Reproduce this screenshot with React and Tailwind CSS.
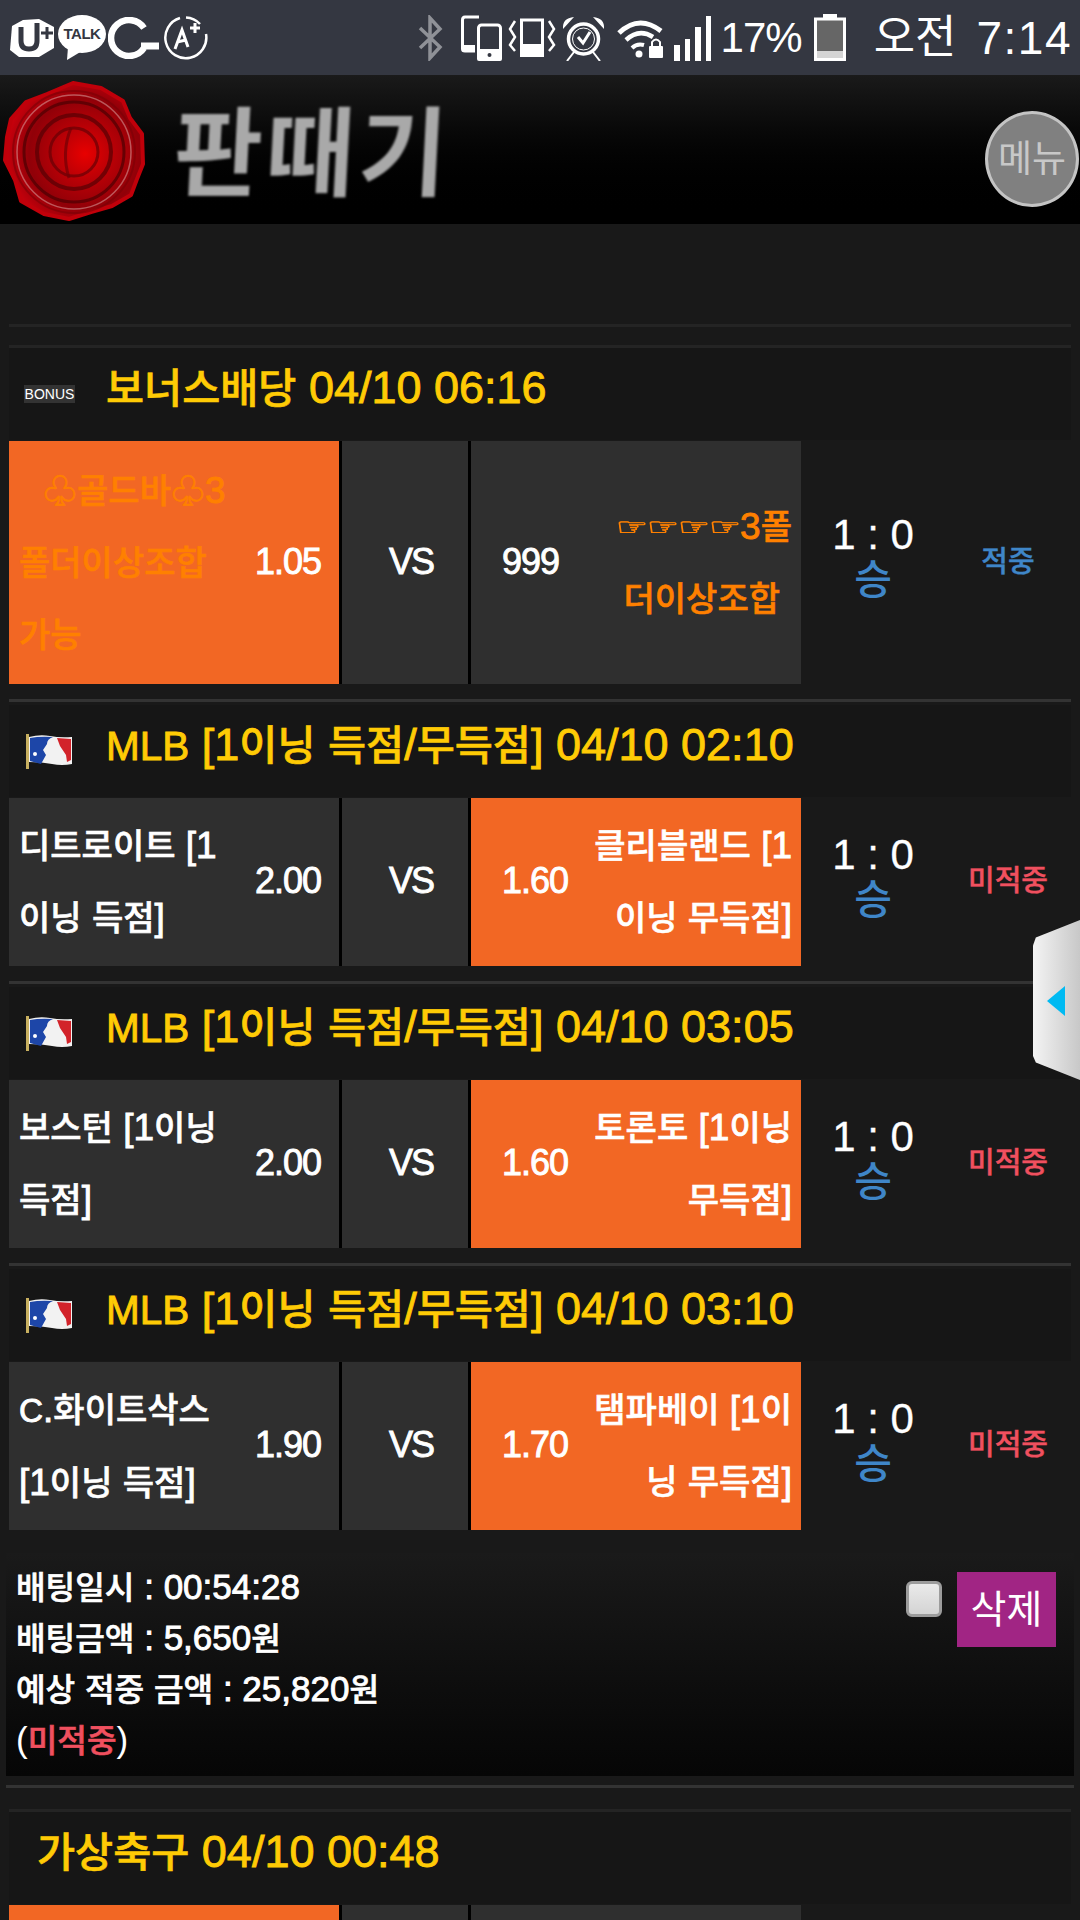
const FONT = "font-['Liberation_Sans','Noto_Sans_CJK_KR',sans-serif]";

const rows = [
  {
    title: 'MLB [1이닝 득점/무득점] 04/10 02:10',
    home: '디트로이트 [1이닝 득점]',
    homeOdds: '2.00',
    away: '클리블랜드 [1이닝 무득점]',
    awayOdds: '1.60',
  },
  {
    title: 'MLB [1이닝 득점/무득점] 04/10 03:05',
    home: '보스턴 [1이닝 득점]',
    homeOdds: '2.00',
    away: '토론토 [1이닝 무득점]',
    awayOdds: '1.60',
  },
  {
    title: 'MLB [1이닝 득점/무득점] 04/10 03:10',
    home: 'C.화이트삭스 [1이닝 득점]',
    homeOdds: '1.90',
    away: '탬파베이 [1이닝 무득점]',
    awayOdds: '1.70',
  },
];

// Digits are wider in the reference than hangul and capitals, so those runs get a smaller size
function Mixed({ text }) {
  return text.split(/([가-힣♧]+|[A-Z]+)/).map((part, i) => {
    if (/[가-힣♧]/.test(part)) {
      return <span key={i} className="text-[0.92em] font-medium [-webkit-text-stroke:0.6px]">{part}</span>;
    }
    if (/[A-Z]/.test(part)) {
      return <span key={i} className="text-[0.9em] [-webkit-text-stroke:0.9px]">{part}</span>;
    }
    return <span key={i} className="[-webkit-text-stroke:0.9px]">{part}</span>;
  });
}

function StatusIcons() {
  return (
    <div className="flex items-center">
      <svg width="25" height="46" viewBox="0 0 25 46" fill="none" stroke="#8f9197" strokeWidth="3.5" className="mr-[18px]">
        <path d="M2 13 L22 32 L12 43 V3 L22 14 L2 33" />
      </svg>
      <svg width="41" height="46" viewBox="0 0 41 46" fill="none" className="mr-[6px]">
        <path d="M18 2 H4 Q1.500 2 1.500 5 V34 Q1.500 36 4 36 H14" stroke="#fff" strokeWidth="3" />
        <rect x="17.500" y="10" width="22" height="34" rx="3" stroke="#fff" strokeWidth="3" />
        <rect x="16" y="34" width="25" height="12" rx="2" fill="#fff" />
        <circle cx="28.500" cy="40" r="2" fill="#343741" />
        <path d="M3 30 H14 V36 H3 Z" fill="#fff" />
      </svg>
      <svg width="48" height="40" viewBox="0 0 48 40" fill="none" className="mr-[5px]">
        <path d="M7 3 L2 11 L7 19 L2 27 L7 33 M41 3 L46 11 L41 19 L46 27 L41 33" stroke="#fff" strokeWidth="2.500" />
        <rect x="13.500" y="2" width="21" height="35" stroke="#fff" strokeWidth="3" />
        <rect x="12" y="26" width="24" height="13" fill="#fff" />
      </svg>
      <svg width="45" height="46" viewBox="0 0 45 46" fill="none" className="mr-[11px]">
        <circle cx="22.500" cy="24" r="15" stroke="#fff" strokeWidth="3.500" />
        <circle cx="22.500" cy="24" r="11" stroke="#fff" strokeWidth="1" />
        <path d="M17 22 L22 28 L29 17" stroke="#fff" strokeWidth="3" />
        <path d="M2 14 Q1 3 13 2 Z M43 14 Q44 3 32 2 Z" fill="#fff" />
        <path d="M13 37 L6 46 M32 37 L39 46" stroke="#fff" strokeWidth="2" />
      </svg>
      <svg width="46" height="40" viewBox="0 0 46 40" fill="none" className="mr-[11px]">
        <path d="M2 15 Q22 -4 44 13" stroke="#fff" strokeWidth="5" />
        <path d="M9 22 Q22 10 36 19" stroke="#fff" strokeWidth="4.500" />
        <path d="M15 30 Q20 25 27 27" stroke="#fff" strokeWidth="4" />
        <circle cx="22" cy="36" r="3.500" fill="#fff" />
        <rect x="32" y="28" width="14" height="12" rx="1" fill="#fff" />
        <path d="M35 28 V24 Q39 19 43 24 V28" stroke="#fff" strokeWidth="2" />
      </svg>
      <div className="flex items-end gap-[5px] h-[45px] mt-[2px] mr-[10px]">
        <div className="w-[6px] h-[16px] bg-white" />
        <div className="w-[5px] h-[22px] bg-white" />
        <div className="w-[6px] h-[34px] bg-white" />
        <div className="w-[5px] h-[45px] bg-white" />
      </div>
    </div>
  );
}

function StatusBar() {
  return (
    <div className={`h-[75px] bg-[#343741] flex items-center pl-[9px] pr-[8px] text-white ${FONT}`}>
      <svg width="45" height="40" viewBox="0 0 45 40" className="mr-[4px]" fill="#fff">
        <path d="M3 8 L14 2 L30 1 L45 9 V30 L30 39 H10 L1 32 Z" />
        <path d="M12 9 V23 Q12 31 20 31 Q28 31 28 23 V5" fill="none" stroke="#343741" strokeWidth="5" />
        <path d="M32 15 H44 M38 9 V21" stroke="#343741" strokeWidth="3" />
      </svg>
      <div className="relative w-[48px] h-[45px] mr-[2px]">
        <svg width="48" height="45" viewBox="0 0 48 45" fill="#fff" className="absolute inset-0">
          <ellipse cx="24" cy="19" rx="24" ry="19" />
          <path d="M10 32 L9 45 L24 36 Z" />
        </svg>
        <span className="absolute left-0 right-0 top-[10px] text-center text-[15px] leading-[18px] font-bold tracking-[-0.5px] text-[#343741]">TALK</span>
      </div>
      <svg width="51" height="42" viewBox="0 0 51 42" fill="none" stroke="#fff" strokeWidth="6.500" className="mr-[3px]">
        <path d="M36 11 A18 18 0 1 0 36 31" />
        <path d="M33 29 H51" strokeWidth="7" />
      </svg>
      <svg width="46" height="44" viewBox="0 0 46 44" fill="none" stroke="#fff" strokeWidth="2.500">
        <path d="M18 2 A20.500 20.500 0 1 0 44 18" />
        <path d="M24 1.500 A21 21 0 0 1 38 8" />
        <path d="M13 33 L20 14 L26 31 M15 26 L24 24" strokeWidth="3" />
        <path d="M28 12 H38 M33 7 V17" strokeWidth="3" />
      </svg>
      <div className="flex-1" />
      <StatusIcons />
      <span className="text-[42px] leading-none tracking-[-1px] mr-[12px]">17%</span>
      <svg width="32" height="47" viewBox="0 0 32 47" className="mr-[28px]" fill="none">
        <rect x="1.500" y="5" width="29" height="40.500" stroke="#fff" strokeWidth="3" fill="#666" />
        <rect x="9" y="0" width="14" height="5" fill="#fff" />
        <rect x="3" y="37" width="26" height="7" fill="#d5d5d5" />
      </svg>
      <span className="text-[45px] leading-none mr-[20px]">오전</span>
      <span className="text-[46px] leading-none tracking-[1.500px]">7:14</span>
    </div>
  );
}

function Seal() {
  return (
    <svg width="146" height="142" viewBox="0 0 146 142" className="shrink-0 ml-[1px]">
      <defs>
        <radialGradient id="wax" cx="58%" cy="52%" r="58%">
          <stop offset="0%" stopColor="#e80000" />
          <stop offset="35%" stopColor="#b80006" />
          <stop offset="70%" stopColor="#900008" />
          <stop offset="100%" stopColor="#c8000c" />
        </radialGradient>
      </defs>
      <path
        d="M72 3 L100 8 L122 21 L129 38 L141 54 L142 84 L136 99 L130 115 L111 126 L90 132 L68 139 L43 134 L20 121 L14 100 L4 80 L6 57 L10 39 L25 22 L46 14 Z"
        fill="url(#wax)"
        stroke="#c0000a"
        strokeWidth="4"
        strokeLinejoin="round"
      />
      <g fill="none">
        <circle cx="73" cy="72" r="61" stroke="#7a0006" strokeWidth="2" opacity="0.6" />
        <circle cx="73" cy="72" r="57" stroke="#d9a0a0" strokeWidth="1.500" opacity="0.55" />
        <circle cx="73" cy="72" r="50" stroke="#4c0003" strokeWidth="3" opacity="0.7" />
        <circle cx="73" cy="72" r="37" stroke="#560004" strokeWidth="4" opacity="0.7" />
        <circle cx="73" cy="72" r="24" stroke="#660005" strokeWidth="3" opacity="0.7" />
        <path d="M70 48 Q60 72 68 98" stroke="#700005" strokeWidth="3" opacity="0.7" />
      </g>
    </svg>
  );
}

function Header() {
  return (
    <div className={`h-[149px] bg-gradient-to-b from-[#1a1a1a] to-black flex items-center relative pt-[2px] ${FONT}`}>
      <Seal />
      <span className="ml-[27px] mt-[8px] text-[96px] leading-none font-bold text-[#a9a9a9] tracking-[4px] -skew-x-3 blur-[0.8px]">
        판때기
      </span>
      <button className="absolute right-[1px] top-[36px] w-[94px] h-[96px] rounded-[50%] bg-[#808080] border-[3px] border-[#c4c4c4] text-[#c8c8c8] text-[37px] leading-none flex items-center justify-center">
        메뉴
      </button>
    </div>
  );
}

function MlbFlag() {
  return (
    <svg width="46" height="35" viewBox="0 0 46 35" className="shrink-0">
      <rect x="0" y="0" width="3" height="35" fill="#c8b060" />
      <path d="M3 3 Q14 0 24 2 T46 3 V30 Q36 32 26 30 T3 28 Z" fill="#f2f2f2" />
      <path d="M4 4 Q14 2 27 3 Q21 5 21 10 L17 16 L20 21 L15 30 L4 27 Z" fill="#1d46a8" />
      <path d="M31 4 L45 5 V26 L41 28 L40 21 L34 12 Z" fill="#d2232a" />
      <circle cx="9" cy="20" r="2" fill="#fff" />
    </svg>
  );
}

function Score({ result, color }) {
  return (
    <div className="flex-1 flex items-center">
      <div className="w-[144px] flex flex-col items-center mb-[10px]">
        <span className="text-white text-[42px] leading-[45px] [-webkit-text-stroke:0.3px]">1 : 0</span>
        <span className="text-[#3f86c8] text-[41px] leading-[46px] font-medium">승</span>
      </div>
      <span className={`flex-1 text-center text-[29px] font-medium [-webkit-text-stroke:0.4px] ${color}`}>{result}</span>
    </div>
  );
}

function GroupHeader({ icon, title, pad }) {
  return (
    <div className={`h-[92px] mb-[1px] flex items-center ${pad} bg-[#161616]`}>
      {icon && <div className="w-[80px] shrink-0 flex items-center">{icon}</div>}
      <span className="text-[#ffcb05] text-[45px] leading-none mb-[12px] whitespace-nowrap">
        <Mixed text={title} />
      </span>
    </div>
  );
}

function Cell({ active, side, name, odds, nameClass = 'text-white' }) {
  const bg = active ? 'bg-[#f26724]' : 'bg-[#2f2f2f]';
  const isLeft = side === 'left';
  return (
    <div className={`w-[330px] ${bg} flex items-center justify-between ${isLeft ? 'pl-[10px] pr-[18px]' : 'flex-row-reverse pr-[9px] pl-[31px]'}`}>
      <div className={`w-[218px] shrink-0 text-[37px] leading-[72px] break-all ${isLeft ? 'text-left' : 'text-right'} ${nameClass}`}>
        {typeof name === 'string' ? <Mixed text={name} /> : name}
      </div>
      <span className="text-white text-[36px] tracking-[-1px] shrink-0 [-webkit-text-stroke:0.9px] mb-[2px]">{odds}</span>
    </div>
  );
}

function BetRow({ h, home, homeOdds, away, awayOdds, homeActive, awayActive, homeClass, awayClass, result, resultColor }) {
  return (
    <div className={`flex ${h}`}>
      <div className="flex bg-black gap-[3px] w-[792px]">
        <Cell active={homeActive} side="left" name={home} odds={homeOdds} nameClass={homeClass} />
        <div className="w-[126px] bg-[#2f2f2f] flex items-center justify-center pl-[12px] pb-[2px] text-white text-[36px] tracking-[-2px] [-webkit-text-stroke:0.9px]">VS</div>
        <Cell active={awayActive} side="right" name={away} odds={awayOdds} nameClass={awayClass} />
      </div>
      <Score result={result} color={resultColor} />
    </div>
  );
}

function BetSummary() {
  return (
    <div className="mx-[-3px] mt-[23px] h-[223px] bg-gradient-to-b from-[#1a1a1a] to-[#060606] pl-[10px] pr-[18px] pt-[9px] flex justify-between">
      <div className="text-white text-[35px] leading-[49px]">
        <div><Mixed text="배팅일시 : 00:54:28" /></div>
        <div><Mixed text="배팅금액 : 5,650원" /></div>
        <div><Mixed text="예상 적중 금액 : 25,820원" /></div>
        <div>
          (<span className="text-[#f0505f] text-[0.92em] font-medium [-webkit-text-stroke:0.6px]">미적중</span>)
        </div>
      </div>
      <div className="flex items-start pt-[10px]">
        <div className="mt-[9px] w-[36px] h-[36px] rounded-[6px] border-[3px] border-[#9c9c9c] bg-gradient-to-b from-[#eaeaea] to-[#d4d4d4] mr-[15px]" />
        <button className="w-[99px] h-[75px] bg-[#a12584] text-white text-[39px] leading-none">삭제</button>
      </div>
    </div>
  );
}

function SideHandle() {
  return (
    <div className="absolute right-0 top-[920px] w-[47px] h-[160px]">
      <div className="w-full h-full bg-gradient-to-r from-[#f4f4f4] to-[#c8c8c8] [clip-path:polygon(100%_0,6%_11%,0_16%,0_85%,6%_89%,100%_100%)]" />
      <svg width="18" height="30" viewBox="0 0 18 30" className="absolute left-[14px] top-[66px]">
        <path d="M18 0 V30 L0 15 Z" fill="#00baf2" />
      </svg>
    </div>
  );
}

export default function App() {
  const bonusHome = (
    <>
      <span className="inline-block w-[24px]" />
      <Mixed text="♧골드바♧3폴더이상조합가능" />
    </>
  );
  const bonusAway = (
    <>
      {[0, 1, 2, 3].map((i) => (
        <span key={i} className="inline-block w-[31px] text-center text-[36px] leading-none scale-y-[0.65] font-['DejaVu_Sans',sans-serif] font-bold [-webkit-text-stroke:1px]">☞</span>
      ))}
      <Mixed text="3폴" />
      <br />
      <span className="inline-block mr-[12px]">
        <Mixed text="더이상조합" />
      </span>
    </>
  );

  return (
    <div className={`relative w-[1080px] h-[1920px] overflow-hidden bg-[#191919] ${FONT}`}>
      <StatusBar />
      <Header />

      <div className="px-[9px] pt-[100px]">
        <div className="h-[3px] bg-[#242424]" />
        <div className="mt-[18px] h-[3px] bg-[#242424]" />

        <GroupHeader
          icon={<span className="-ml-[2px] w-[51px] h-[18px] bg-[#333] text-white text-[14px] leading-[18px] text-center">BONUS</span>}
          title="보너스배당 04/10 06:16"
          pad="pl-[17px]"
        />
        <BetRow
          h="h-[243px]"
          home={bonusHome}
          homeOdds="1.05"
          away={bonusAway}
          awayOdds="999"
          homeActive
          homeClass="text-[#ff8000]"
          awayClass="text-[#ff8000]"
          result="적중"
          resultColor="text-[#3f86c8]"
        />

        {rows.map((row) => (
          <div key={row.title}>
            <div className="mt-[15px] h-[3px] bg-[#333]" />
            <div className="h-[3px]" />
            <GroupHeader icon={<MlbFlag />} title={row.title} pad="pl-[17px]" />
            <BetRow
              h="h-[168px]"
              home={row.home}
              homeOdds={row.homeOdds}
              away={row.away}
              awayOdds={row.awayOdds}
              awayActive
              result="미적중"
              resultColor="text-[#f0505f]"
            />
          </div>
        ))}

        <BetSummary />

        <div className="mx-[-3px] mt-[9px] h-[3px] bg-[#333]" />
        <div className="mt-[21px] h-[3px] bg-[#242424]" />
        <GroupHeader title="가상축구 04/10 00:48" pad="pl-[28px]" />
        <div className="flex bg-black gap-[3px] w-[792px] h-[60px]">
          <div className="w-[330px] bg-[#f26724]" />
          <div className="w-[126px] bg-[#2f2f2f]" />
          <div className="w-[330px] bg-[#2f2f2f]" />
        </div>
      </div>

      <SideHandle />
    </div>
  );
}
